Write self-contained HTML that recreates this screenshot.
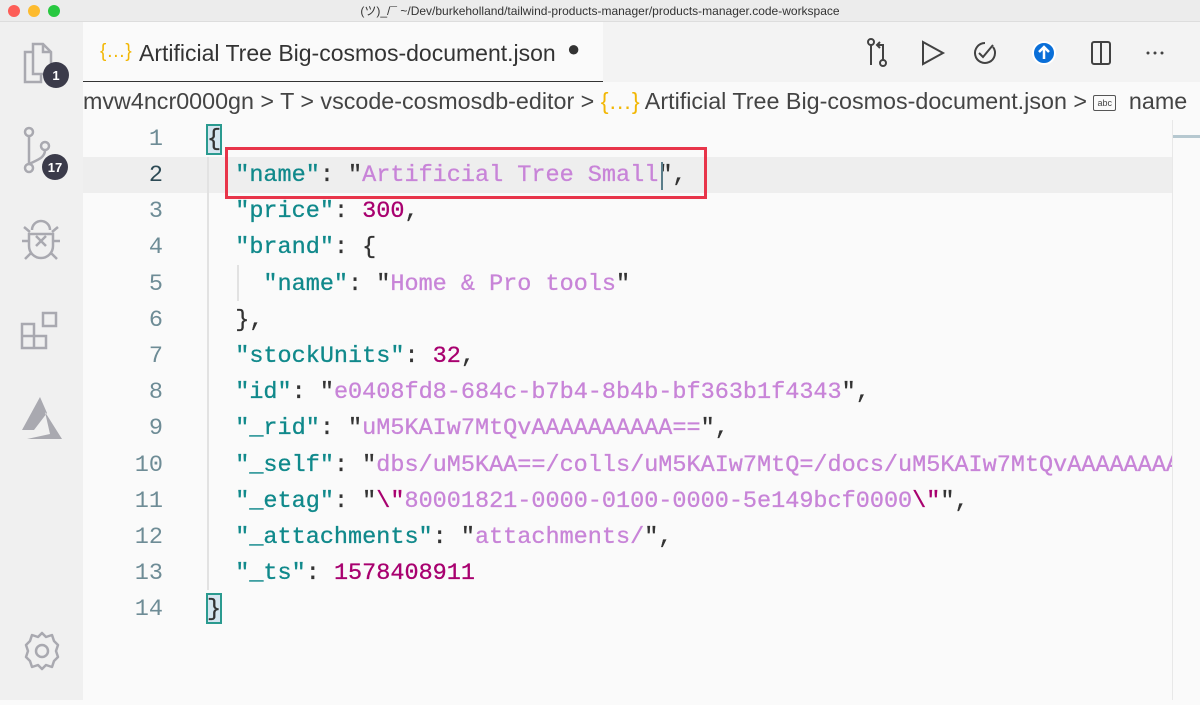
<!DOCTYPE html>
<html><head><meta charset="utf-8"><style>
*{margin:0;padding:0;box-sizing:border-box}
body{width:1200px;height:700px;overflow:hidden;background:#fafafa;font-family:"Liberation Sans",sans-serif;position:relative}
.title{position:absolute;left:0;top:0;width:1200px;height:22px;background:#ececec;border-bottom:1px solid #ddd;text-align:center;font-size:12px;color:#333;line-height:22px}
.dot{position:absolute;top:5px;width:12px;height:12px;border-radius:50%}
.act{position:absolute;left:0;top:22px;width:83px;height:678px;background:#f0f0f0}
.tabs{position:absolute;left:83px;top:22px;width:1117px;height:60px;background:#f3f3f3}
.tab{position:absolute;left:0;top:0;width:520px;height:60px;background:#fafafa;border-bottom:1px solid #333}
.tab span{position:absolute;top:18px;font-size:23px;color:#333}
.bc{position:absolute;left:83px;top:82px;width:1117px;height:38px;background:#fafafa;font-size:23.3px;color:#444;line-height:38px;white-space:nowrap;overflow:hidden}
.code{position:absolute;left:83px;top:120px;width:1117px;height:580px;font-family:"Liberation Mono",monospace;font-size:23.5px;white-space:pre;overflow:hidden}
.ln{position:absolute;left:0;width:80px;text-align:right;color:#6e8c96}
.cl{position:absolute;left:124px;color:#333;-webkit-text-stroke:0.3px}
.k{color:#10898b}.s{color:#c884d8}.n{color:#a8006f}.e{color:#a8006f}
</style></head><body>
<div class="title">(ツ)_/¯ ~/Dev/burkeholland/tailwind-products-manager/products-manager.code-workspace</div>
<div class="dot" style="left:8px;background:#fd5d57"></div>
<div class="dot" style="left:28px;background:#fdbb2e"></div>
<div class="dot" style="left:48px;background:#28c840"></div>
<div class="act">
<svg width="83" height="678" fill="none" stroke="#a9a9b0" stroke-width="2.5">
<path d="M33 22h10l8 8v22H33z M43 22v8h8 M33 30h-8v30h16v-8"/>
<circle cx="56" cy="53" r="13" fill="#3b3b4a" stroke="none"/>
<text x="56" y="58" font-size="13" font-weight="bold" fill="#fff" stroke="none" text-anchor="middle" font-family="Liberation Sans">1</text>
<circle cx="29" cy="110" r="4"/><circle cx="45" cy="124" r="4"/><circle cx="29" cy="146" r="4"/>
<path d="M29 114v28 M45 128c0 8-8 10-16 14"/>
<circle cx="55" cy="145" r="13" fill="#3b3b4a" stroke="none"/>
<text x="55" y="150" font-size="13" font-weight="bold" fill="#fff" stroke="none" text-anchor="middle" font-family="Liberation Sans">17</text>
<path d="M32 208a9 9 0 0 1 18 0 M29 212h24v12a12 12 0 0 1-24 0z M36 214l10 10 M46 214l-10 10 M22 219h7 M53 219h7 M24 205l6 5 M58 205l-6 5 M25 237l6-6 M57 237l-6-6"/>
<path d="M22 302h12v12H22z M22 314h12v12H22z M34 314h12v12H34z M43 291h13v13H43z"/>
<path d="M40 375L22 408h12l13-17z M45 390l17 27H27l23-5z" fill="#a9a9b0" stroke="none"/>
<circle cx="42" cy="629" r="6"/>
<path d="M42 611l4 4 6-2 2 6 4 4-2 6 2 6-4 4-2 6-6-2-4 4-4-4-6 2-2-6-4-4 2-6-2-6 4-4 2-6 6 2z" stroke-linejoin="round"/>
</svg>
</div>
<div class="tabs">
<div class="tab"><span style="left:17px;color:#f2b705;font-size:19px;top:19px">{…}</span><span style="left:56px">Artificial Tree Big-cosmos-document.json</span><span style="left:484px;top:14px;font-size:22px">●</span></div>
<svg style="position:absolute;left:770px;top:15px" width="340" height="32" fill="none" stroke="#424242" stroke-width="2">
<circle cx="18" cy="5" r="3"/><circle cx="30" cy="26" r="3"/><path d="M18 8v20 M30 23V8h-6 M27 5l-3 3 3 3"/>
<path d="M70 5l20 11-20 11z"/>
<path d="M132 6a10 10 0 1 0 8 4 M126 16l4 4 10-12"/>
<circle cx="191" cy="16" r="11" fill="#0a6fd8" stroke="#fff"/><path d="M191 22v-11 M186 15l5-5 5 5" stroke="#fff" stroke-width="2.5"/>
<rect x="239" y="5" width="18" height="22" rx="2"/><path d="M248 5v22"/>
<g fill="#424242" stroke="none"><circle cx="295" cy="16" r="1.5"/><circle cx="302" cy="16" r="1.5"/><circle cx="309" cy="16" r="1.5"/></g>
</svg>
</div>
<div class="bc">mvw4ncr0000gn &gt; T &gt; vscode-cosmosdb-editor &gt; <span style="color:#f2b705">{…}</span> Artificial Tree Big-cosmos-document.json &gt; <span style="display:inline-block;border:1.5px solid #555;font-size:9px;line-height:14px;padding:0 3px;vertical-align:middle;border-radius:2px">abc</span>&nbsp; name</div>
<div class="code">
<div style="position:absolute;left:0;top:37px;width:1117px;height:36px;background:#eeeeee"></div>
<div style="position:absolute;left:124px;top:37px;width:2px;height:433px;background:#e2e2e2"></div>
<div style="position:absolute;left:154px;top:145px;width:2px;height:36px;background:#e2e2e2"></div>
<div style="position:absolute;left:123px;top:4px;width:16px;height:31px;border:2px solid #2a9a8f;background:#d6e6f0"></div>
<div style="position:absolute;left:123px;top:473px;width:16px;height:31px;border:2px solid #2a9a8f;background:#d6e6f0"></div>
<div class="ln" style="top:6px">1</div><div class="cl" style="top:6px">{</div>
<div class="ln" style="top:42px;color:#2d4a55">2</div><div class="cl" style="top:42px">  <span class="k">"name"</span>: "<span class="s">Artificial Tree Small</span>",</div>
<div class="ln" style="top:78px">3</div><div class="cl" style="top:78px">  <span class="k">"price"</span>: <span class="n">300</span>,</div>
<div class="ln" style="top:114px">4</div><div class="cl" style="top:114px">  <span class="k">"brand"</span>: {</div>
<div class="ln" style="top:151px">5</div><div class="cl" style="top:151px">    <span class="k">"name"</span>: "<span class="s">Home &amp; Pro tools</span>"</div>
<div class="ln" style="top:187px">6</div><div class="cl" style="top:187px">  },</div>
<div class="ln" style="top:223px">7</div><div class="cl" style="top:223px">  <span class="k">"stockUnits"</span>: <span class="n">32</span>,</div>
<div class="ln" style="top:259px">8</div><div class="cl" style="top:259px">  <span class="k">"id"</span>: "<span class="s">e0408fd8-684c-b7b4-8b4b-bf363b1f4343</span>",</div>
<div class="ln" style="top:295px">9</div><div class="cl" style="top:295px">  <span class="k">"_rid"</span>: "<span class="s">uM5KAIw7MtQvAAAAAAAAAA==</span>",</div>
<div class="ln" style="top:332px">10</div><div class="cl" style="top:332px">  <span class="k">"_self"</span>: "<span class="s">dbs/uM5KAA==/colls/uM5KAIw7MtQ=/docs/uM5KAIw7MtQvAAAAAAAAAA==/</span>",</div>
<div class="ln" style="top:368px">11</div><div class="cl" style="top:368px">  <span class="k">"_etag"</span>: "<span class="e">\"</span><span class="s">80001821-0000-0100-0000-5e149bcf0000</span><span class="e">\"</span>",</div>
<div class="ln" style="top:404px">12</div><div class="cl" style="top:404px">  <span class="k">"_attachments"</span>: "<span class="s">attachments/</span>",</div>
<div class="ln" style="top:440px">13</div><div class="cl" style="top:440px">  <span class="k">"_ts"</span>: <span class="n">1578408911</span></div>
<div class="ln" style="top:476px">14</div><div class="cl" style="top:476px">}</div>
<div style="position:absolute;left:578px;top:42px;width:2px;height:28px;background:#5a7d8a"></div>
<div style="position:absolute;left:142px;top:27px;width:482px;height:52px;border:3px solid #e8354a"></div>
<div style="position:absolute;left:1090px;top:0;width:27px;height:580px;background:#fafafa"></div>
<div style="position:absolute;left:1089px;top:0;width:1px;height:580px;background:#e8e8e8"></div>
<div style="position:absolute;left:1090px;top:15px;width:27px;height:3px;background:#b6c8d0"></div>
</div>
</body></html>
